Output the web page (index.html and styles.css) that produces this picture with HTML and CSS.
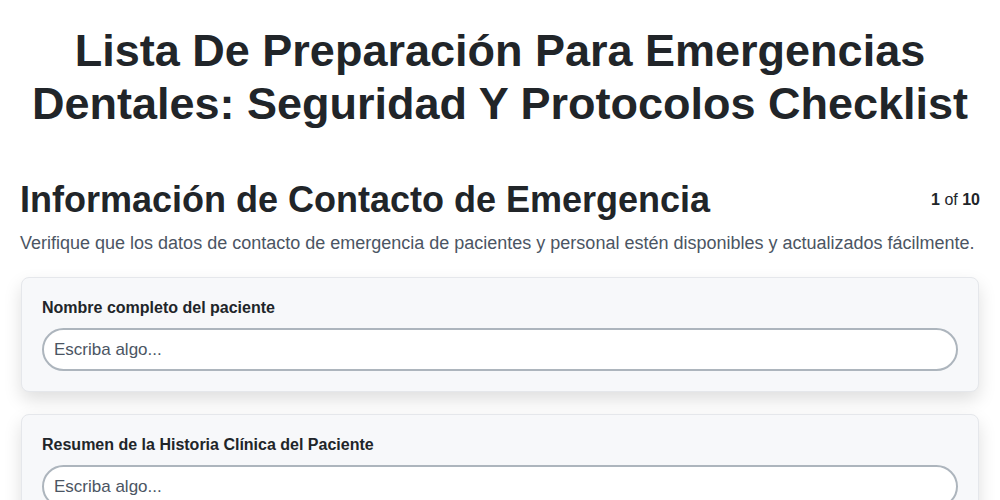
FILE: index.html
```html
<!DOCTYPE html>
<html lang="es">
<head>
<meta charset="utf-8">
<title>Checklist</title>
<link rel="stylesheet" href="styles.css">
</head>
<body>
<main class="page">
  <h1 class="title">Lista De Preparación Para Emergencias Dentales: Seguridad Y Protocolos Checklist</h1>
  <section class="section">
    <div class="section-head">
      <h2 class="section-title">Información de Contacto de Emergencia</h2>
      <div class="counter"><b>1</b> of <b>10</b></div>
    </div>
    <p class="section-desc">Verifique que los datos de contacto de emergencia de pacientes y personal estén disponibles y actualizados fácilmente.</p>
    <div class="card">
      <label class="field-label">Nombre completo del paciente</label>
      <input class="field-input" type="text" placeholder="Escriba algo...">
    </div>
    <div class="card">
      <label class="field-label">Resumen de la Historia Clínica del Paciente</label>
      <input class="field-input" type="text" placeholder="Escriba algo...">
    </div>
  </section>
</main>
</body>
</html>
```
FILE: styles.css
```css
* { box-sizing: border-box; }
html, body { margin: 0; padding: 0; background: #ffffff; }
body {
  font-family: "Liberation Sans", Arial, sans-serif;
  color: #212529;
}
.page {
  padding: 24px 20px 40px;
}
.title {
  margin: 0;
  text-align: center;
  font-size: 45px;
  line-height: 53px;
  font-weight: 700;
  color: #212529;
}
.section {
  margin-top: 48px;
}
.section-head {
  display: flex;
  justify-content: space-between;
  align-items: flex-start;
}
.section-title {
  margin: 0;
  font-size: 36px;
  line-height: 1.2;
  font-weight: 700;
  color: #212529;
}
.counter {
  font-size: 16px;
  line-height: 24px;
  margin-top: 10px;
  color: #212529;
}
.section-desc {
  margin: 9px 0 20px;
  font-size: 18px;
  line-height: 27px;
  color: #4b5563;
}
.card {
  background: #f7f8fa;
  border: 1px solid #e5e7eb;
  border-radius: 8px;
  padding: 18px 20px 20px;
  margin: 0 1px 22px;
  box-shadow: 0 8px 18px rgba(0, 0, 0, 0.13);
  display: flex;
  flex-direction: column;
  gap: 8px;
}
.field-label {
  font-size: 16px;
  line-height: 24px;
  font-weight: 700;
  color: #212529;
}
.field-input {
  width: 100%;
  height: 43px;
  border: 2px solid #adb5bd;
  border-radius: 22px;
  background: #ffffff;
  padding: 0 10px;
  font-family: "Liberation Sans", Arial, sans-serif;
  font-size: 17px;
  color: #212529;
  outline: none;
}
.field-input::placeholder {
  color: #4b5563;
  opacity: 1;
}
```
